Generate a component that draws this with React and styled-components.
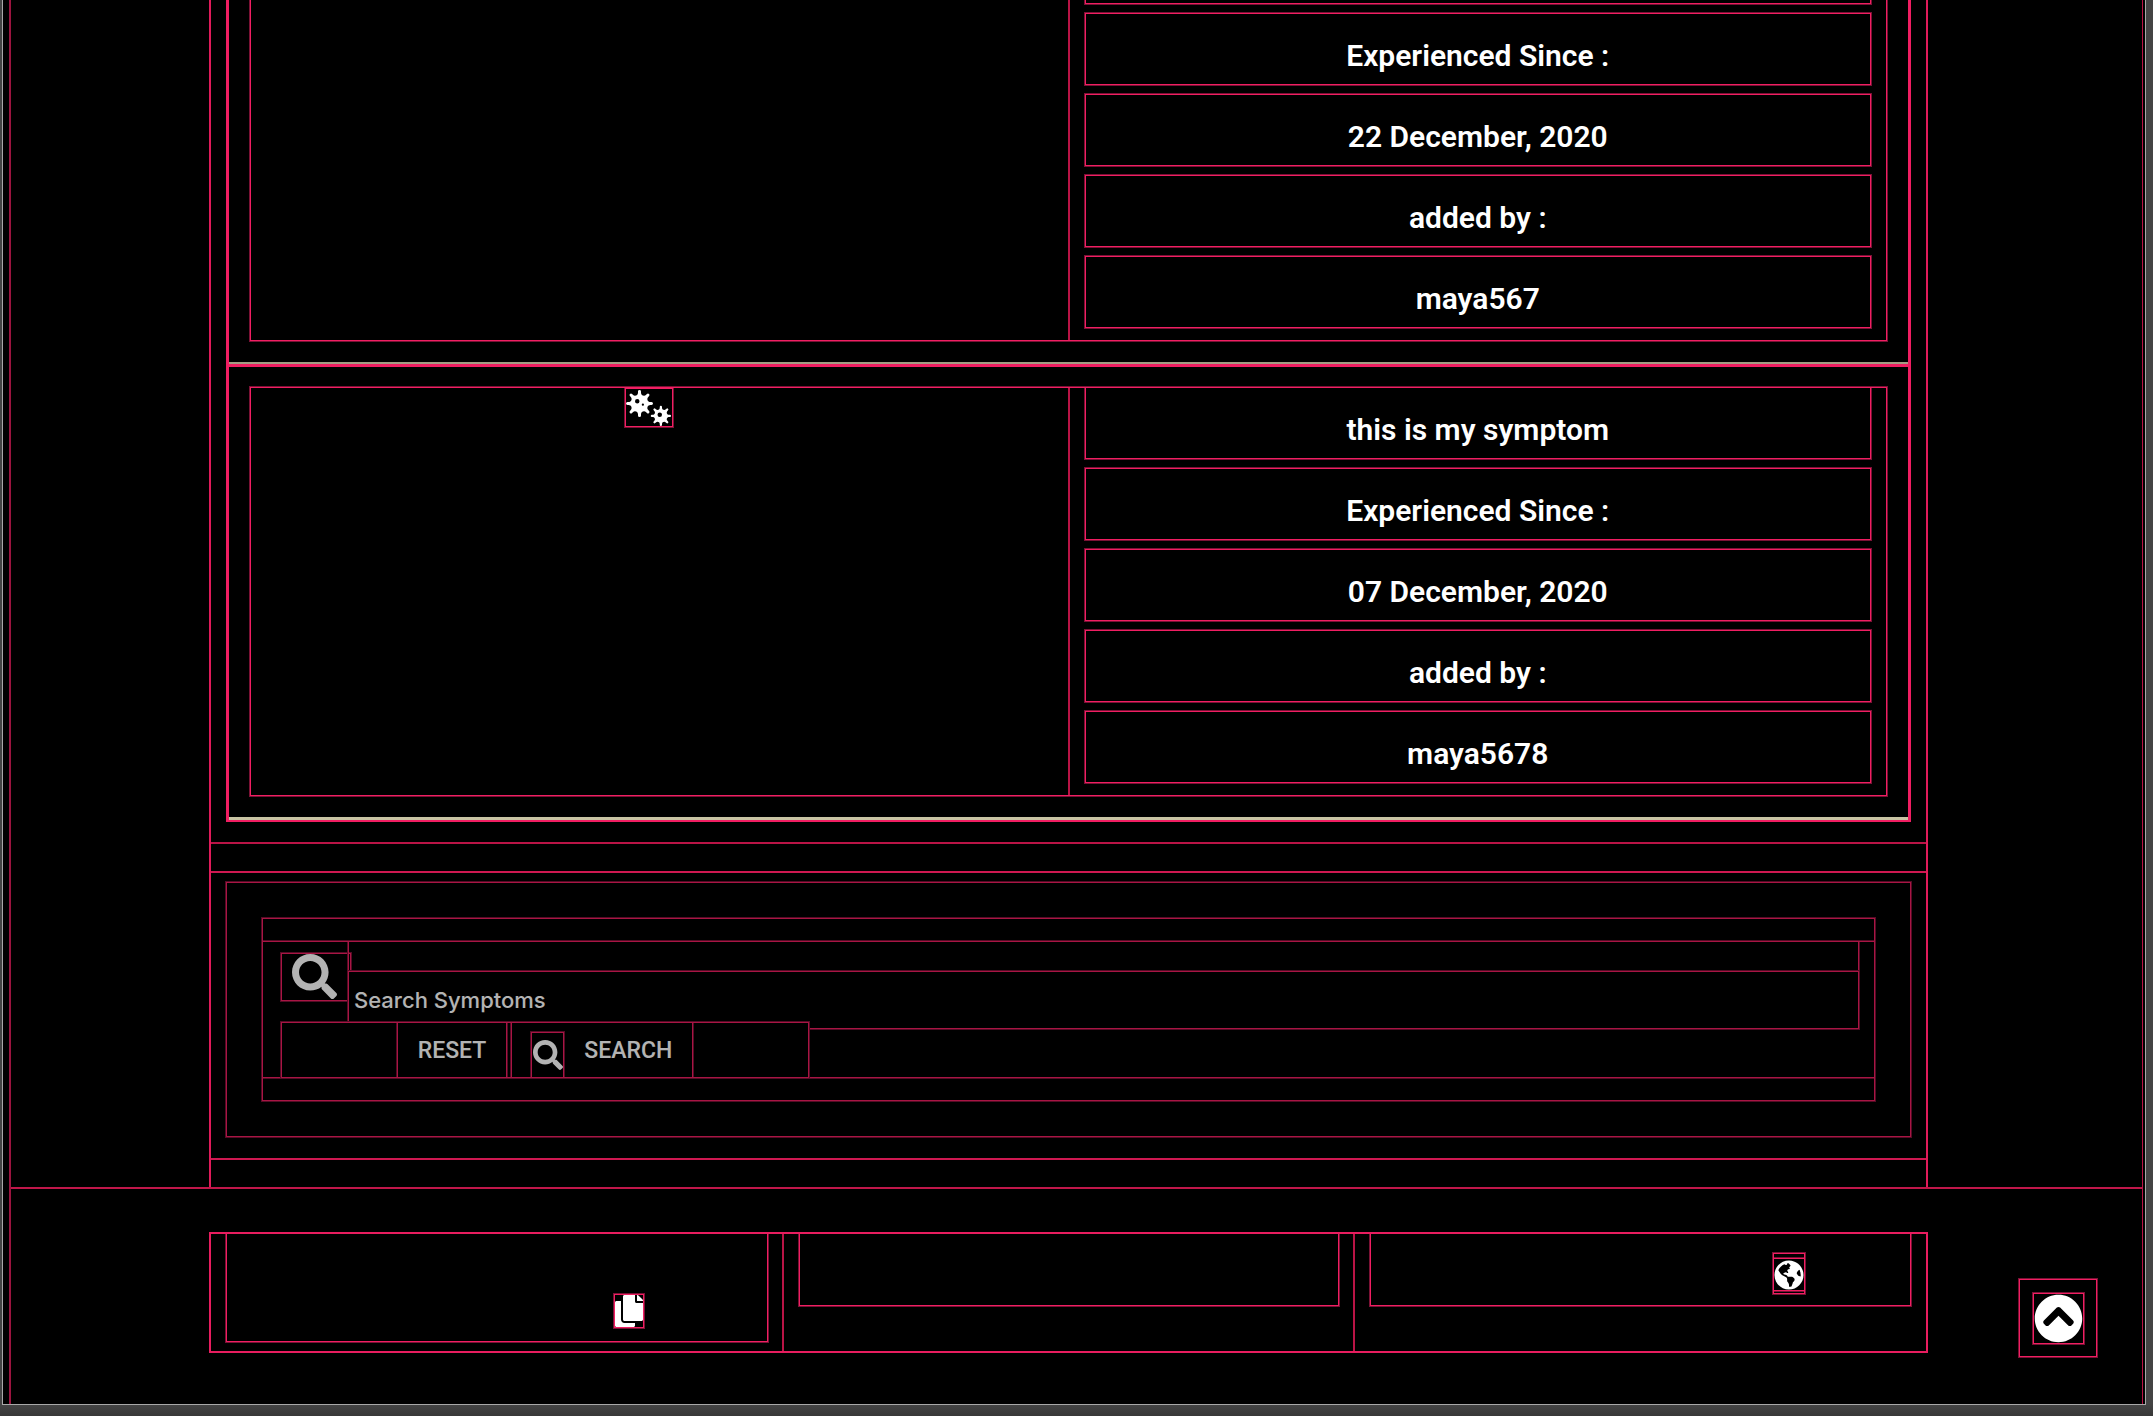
import React from 'react';
import styled, { createGlobalStyle, css } from 'styled-components';
import { FaViruses, FaSearch, FaCopy, FaGlobeAmericas, FaChevronCircleUp } from 'react-icons/fa';

const GlobalStyle = createGlobalStyle`
  *, *::before, *::after { box-sizing: border-box; }
  html, body, #root { height: 100%; }
  body {
    margin: 0;
    overflow: hidden;
    background: #3d3d3d;
    color: #fff;
    font-family: Roboto, "Liberation Sans", sans-serif;
  }
`;

const outlined = css`
  outline: 1px solid #f01e62;
  box-shadow: 0 0 0 2px #7a1235;
`;

const Shell = styled.div`
  height: 100%;
  padding: 0 7px 11px 2px;
  background: linear-gradient(to top, #383838, #444 12px);
`;

const Viewport = styled.div`
  position: relative;
  display: flex;
  flex-direction: column;
  height: 100%;
  padding: 0 2px 0 6px;
  overflow: hidden;
  background: #000;
  border: 1px solid #a8a8a8;
  border-top: 0;
`;

const Page = styled.div`
  flex: 1;
  display: flex;
  flex-direction: column;
  border: solid #b91446;
  border-width: 0 1px 0 2px;
  border-left-color: #9c143f;
`;

const Main = styled.main`
  padding: 0 214px 0 198px;
  border-bottom: 2px solid #c0174a;
`;

const Column = styled.div`
  display: flex;
  flex-direction: column;
  gap: 27px;
  padding-bottom: 27px;
  border: solid #e01b5a;
  border-width: 0 2px;
`;

const ListSection = styled.section`
  padding: 0 15px 20px;
  border-bottom: 2px solid #b91446;
`;

const List = styled.ul`
  margin: 0;
  padding: 0;
  list-style: none;
  border: solid #f01e62;
  border-width: 0 3px 2px;
`;

const Item = styled.li`
  padding: ${(p) => (p.$first ? '0' : '21px')} 22px 22px;
  border-bottom: ${(p) => (p.$first ? '2px solid #a39c83' : '3px solid #c9c4a4')};
  & + & { border-top: 3px solid #f01e62; }
`;

const Card = styled.article`
  ${outlined}
  display: grid;
  grid-template-columns: 1fr 1fr;
`;

const Picture = styled.div`
  display: flex;
  justify-content: center;
  align-items: flex-start;
  padding: 1px 22px 0 0;
`;

const IconFrame = styled.span`
  ${outlined}
  display: inline-flex;
  justify-content: center;
  align-items: center;
  background: #000;
`;

const VirusFrame = styled(IconFrame)`
  width: 46px;
  height: 37px;
  svg { width: 45px; height: 36px; }
`;

const Facts = styled.div`
  display: flex;
  flex-direction: column;
  gap: 11px;
  margin-left: -1px;
  padding: 0 16px 13px;
  border-left: 2px solid #b91446;
`;

const Fact = styled.p`
  ${outlined}
  margin: 0;
  padding-top: 24px;
  height: 70px;
  font-size: 30px;
  line-height: 36px;
  font-weight: 600;
  text-align: center;
`;

const FactTail = styled.div`
  ${outlined}
  height: 3px;
`;

const SearchSection = styled.section`
  padding: 10px 16px 22px;
  border: solid #cf1851;
  border-width: 2px 0;
`;

const SearchPanel = styled.div`
  ${outlined}
  padding: 36px;
  opacity: 0.7;
`;

const SearchForm = styled.form`
  ${outlined}
  padding: 23px 0;
`;

const FormBody = styled.div`
  ${outlined}
  padding: 0 16px 0 19px;
`;

const Field = styled.div`
  display: flex;
`;

const FieldIcon = styled.label`
  ${outlined}
  display: flex;
  justify-content: center;
  align-items: flex-start;
  width: 68px;
  height: 46px;
  margin-top: 12px;
  margin-right: -1px;
  padding-right: 3px;
`;

const InputGroup = styled.div`
  ${outlined}
  flex: 1;
  padding-top: 30px;
`;

const SearchInput = styled.input`
  ${outlined}
  position: relative;
  display: block;
  width: 100%;
  height: 56px;
  padding: 0 5px;
  border: 0;
  border-radius: 0;
  background: #000;
  color: #fff;
  font: 500 22px Inter, Lato, sans-serif;
  &::placeholder { color: #fff; opacity: 1; }
`;

const Actions = styled.div`
  ${outlined}
  position: relative;
  display: flex;
  justify-content: center;
  gap: 6px;
  width: 526px;
  height: 54px;
  margin-top: -5px;
  background: #000;
`;

const Button = styled.button`
  ${outlined}
  display: flex;
  align-items: center;
  gap: 21px;
  padding: 0 20px;
  border: 0;
  background: #000;
  color: #fff;
  font: 500 23px Roboto, sans-serif;
  text-transform: uppercase;
`;

const ButtonIcon = styled(IconFrame)`
  align-self: flex-end;
  width: 31px;
  height: 44px;
`;

const Footer = styled.footer`
  display: grid;
  grid-template-columns: repeat(3, 1fr);
  margin: 45px 216px 0 200px;
  outline: 2px solid #e81d5f;
`;

const FooterColumn = styled.div`
  padding: 0 16px 10px;
  & + & {
    margin-left: -1px;
    border-left: 2px solid #b91446;
  }
`;

const FooterBox = styled.div`
  ${outlined}
  display: flex;
  justify-content: flex-end;
  align-items: flex-start;
  height: ${(p) => (p.$tall ? '107px' : '71px')};
  padding: ${(p) => (p.$tall ? '61px 124px 0 0' : '20px 106px 0 0')};
`;

const FooterLink = styled.a`
  ${outlined}
  display: flex;
  padding: ${(p) => (p.$padded ? '5px 0 3px' : '0')};
  color: #fff;
`;

const CopyIcon = styled(FaCopy)`
  width: 28px;
  height: 32px;
`;

const GlobeFrame = styled(IconFrame)`
  width: 30px;
  height: 31px;
`;

const TopButton = styled.button`
  ${outlined}
  position: absolute;
  right: 49px;
  bottom: 48px;
  display: flex;
  justify-content: center;
  align-items: center;
  width: 76px;
  height: 76px;
  padding: 0;
  border: 0;
  background: #000;
  color: #fff;
`;

const entries = [
  { facts: ['Experienced Since :', '22 December, 2020', 'added by :', 'maya567'], continued: true },
  { facts: ['this is my symptom', 'Experienced Since :', '07 December, 2020', 'added by :', 'maya5678'] },
];

export default function App() {
  return (
    <>
      <GlobalStyle />
      <Shell>
        <Viewport>
          <Page>
            <Main>
              <Column>
                <ListSection>
                  <List>
                    {entries.map(({ facts, continued }) => (
                      <Item key={facts[facts.length - 1]} $first={continued}>
                        <Card>
                          <Picture>
                            {!continued && (
                              <VirusFrame>
                                <FaViruses />
                              </VirusFrame>
                            )}
                          </Picture>
                          <Facts>
                            {continued && <FactTail />}
                            {facts.map((fact) => (
                              <Fact key={fact}>{fact}</Fact>
                            ))}
                          </Facts>
                        </Card>
                      </Item>
                    ))}
                  </List>
                </ListSection>
                <SearchSection>
                  <SearchPanel>
                    <SearchForm onSubmit={(e) => e.preventDefault()}>
                      <FormBody>
                        <Field>
                          <FieldIcon htmlFor="search" aria-label="Search Symptoms">
                            <FaSearch size={45} />
                          </FieldIcon>
                          <InputGroup>
                            <SearchInput id="search" type="text" placeholder="Search Symptoms" />
                          </InputGroup>
                        </Field>
                        <Actions>
                          <Button type="reset">Reset</Button>
                          <Button type="submit">
                            <ButtonIcon>
                              <FaSearch size={30} />
                            </ButtonIcon>
                            Search
                          </Button>
                        </Actions>
                      </FormBody>
                    </SearchForm>
                  </SearchPanel>
                </SearchSection>
              </Column>
            </Main>
            <Footer>
              <FooterColumn>
                <FooterBox $tall>
                  <FooterLink href="#copy" aria-label="Copy">
                    <CopyIcon />
                  </FooterLink>
                </FooterBox>
              </FooterColumn>
              <FooterColumn>
                <FooterBox />
              </FooterColumn>
              <FooterColumn>
                <FooterBox>
                  <FooterLink href="#world" aria-label="Website" $padded>
                    <GlobeFrame>
                      <FaGlobeAmericas size={30} />
                    </GlobeFrame>
                  </FooterLink>
                </FooterBox>
              </FooterColumn>
            </Footer>
          </Page>
          <TopButton type="button" aria-label="Back to top">
            <IconFrame>
              <FaChevronCircleUp size={49} />
            </IconFrame>
          </TopButton>
        </Viewport>
      </Shell>
    </>
  );
}
